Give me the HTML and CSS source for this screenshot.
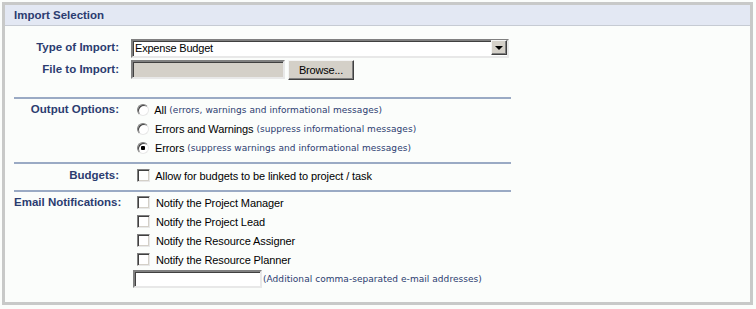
FILE: index.html
```html
<!DOCTYPE html>
<html lang="en">
<head>
<meta charset="UTF-8">
<meta name="viewport" content="width=device-width, initial-scale=1.0">
<title>Import Selection</title>
<link rel="stylesheet" href="styles.css">
</head>
<body>
<div class="panel">
  <div class="panel-head">Import Selection</div>

  <div class="section section-file">
    <div class="field-label">Type of Import:</div>
    <div class="field">
      <div class="select-wrap">
        <select class="select">
          <option>Expense Budget</option>
        </select>
        <span class="select-arrow"></span>
      </div>
    </div>
    <div class="field-label">File to Import:</div>
    <div class="field">
      <span class="file-box"></span>
      <button class="btn">Browse...</button>
    </div>
  </div>

  <div class="section section-output">
    <div class="field-label">Output Options:</div>
    <div class="field-list">
      <label class="opt"><input type="radio" name="output" class="radio"> All <span class="hint">(errors, warnings and informational messages)</span></label>
      <label class="opt"><input type="radio" name="output" class="radio"> Errors and Warnings <span class="hint">(suppress informational messages)</span></label>
      <label class="opt"><input type="radio" name="output" class="radio" checked> Errors <span class="hint">(suppress warnings and informational messages)</span></label>
    </div>
  </div>

  <div class="section section-budgets">
    <div class="field-label">Budgets:</div>
    <div class="field-list">
      <label class="opt"><input type="checkbox" class="check"> Allow for budgets to be linked to project / task</label>
    </div>
  </div>

  <div class="section section-email">
    <div class="field-label">Email Notifications:</div>
    <div class="field-list">
      <label class="opt"><input type="checkbox" class="check"> Notify the Project Manager</label>
      <label class="opt"><input type="checkbox" class="check"> Notify the Project Lead</label>
      <label class="opt"><input type="checkbox" class="check"> Notify the Resource Assigner</label>
      <label class="opt"><input type="checkbox" class="check"> Notify the Resource Planner</label>
      <div class="extra">
        <input type="text" class="text-input"><span class="hint">(Additional comma-separated e-mail addresses)</span>
      </div>
    </div>
  </div>
</div>
</body>
</html>
```

FILE: styles.css
```css
body {
  margin: 0;
  padding: 2px;
  background-color: #fbfdfb;
  font-family: "Liberation Sans", Arial, sans-serif;
}

.panel {
  width: 745px;
  border: 3px solid #c8c9c8;
  background-color: #fbfdfb;
}

.panel-head {
  height: 20px;
  line-height: 20px;
  padding-left: 9px;
  background-color: #e3e8f3;
  border-bottom: 1px solid #c6cbd3;
  color: #2b3c70;
  font-size: 11.5px;
  font-weight: bold;
}

.section {
  display: grid;
  grid-template-columns: 105px 1fr;
  column-gap: 12px;
  width: 497px;
  margin-left: 9px;
  border-bottom: 2px solid #9aaac4;
}

.section-file {
  row-gap: 3px;
  padding: 12px 0 18px;
}

.section-output {
  padding: 1px 0 5px;
}

.section-budgets {
  padding: 2px 0 5px;
}

.section-email {
  padding: 1px 0 14px;
  border-bottom: none;
}

.field-label {
  height: 19px;
  line-height: 19px;
  text-align: right;
  color: #2b3c70;
  font-size: 11.5px;
  font-weight: bold;
  white-space: nowrap;
}

.field {
  display: flex;
  align-items: center;
  height: 19px;
}

.field-list {
  display: flex;
  flex-direction: column;
}

.opt {
  display: flex;
  align-items: center;
  height: 19px;
  font-size: 11px;
  letter-spacing: -0.1px;
  color: #000;
  white-space: pre;
}

.hint {
  font-family: "DejaVu Sans", Verdana, sans-serif;
  font-size: 9px;
  letter-spacing: 0.05px;
  color: #2b3c70;
}

/* select */
.select-wrap {
  position: relative;
  width: 378px;
  height: 19px;
}

.select {
  appearance: none;
  -webkit-appearance: none;
  box-sizing: border-box;
  width: 100%;
  height: 19px;
  margin: 0;
  padding: 0 0 0 2px;
  border: 2px solid;
  border-color: #808080 #e8e8e8 #e8e8e8 #808080;
  border-radius: 0;
  box-shadow: inset 1px 1px 0 #404040;
  background-color: #fff;
  font-family: "Liberation Sans", Arial, sans-serif;
  font-size: 11px;
  letter-spacing: -0.2px;
  color: #000;
  outline: none;
}

.select-arrow {
  position: absolute;
  top: 2px;
  right: 2px;
  box-sizing: border-box;
  width: 16px;
  height: 15px;
  background-color: #d4d0c8;
  border: 1px solid;
  border-color: #f4f4f4 #404040 #404040 #f4f4f4;
  box-shadow: inset -1px -1px 0 #808080;
  pointer-events: none;
}

.select-arrow::after {
  content: "";
  position: absolute;
  left: 3px;
  top: 5px;
  border-left: 4px solid transparent;
  border-right: 4px solid transparent;
  border-top: 4px solid #000;
}

/* file */
.file-box {
  box-sizing: border-box;
  width: 154px;
  height: 19px;
  background-color: #d4d0c8;
  border: 2px solid;
  border-color: #808080 #e8e8e8 #e8e8e8 #808080;
  box-shadow: inset 1px 1px 0 #404040;
}

.btn {
  box-sizing: border-box;
  width: 66px;
  height: 20px;
  margin: 0 0 0 3px;
  padding: 0;
  background-color: #d4d0c8;
  border: 1px solid;
  border-color: #f4f4f4 #404040 #404040 #f4f4f4;
  box-shadow: inset -1px -1px 0 #808080;
  font-family: "Liberation Sans", Arial, sans-serif;
  font-size: 11px;
  letter-spacing: -0.2px;
  color: #000;
}

/* radios and checkboxes */
.radio,
.check {
  appearance: none;
  -webkit-appearance: none;
  box-sizing: border-box;
  width: 12px;
  height: 12px;
  margin: 0 3px 0 6px;
  background-color: #fff;
  border: 1px solid;
  border-color: #808080 #e8e8e8 #e8e8e8 #808080;
  flex: none;
}

.radio {
  border-radius: 50%;
  box-shadow: inset 1px 1px 0 #404040;
}

.radio:checked {
  background-image: radial-gradient(circle, #000 0, #000 2px, #fff 2.5px);
}

.check {
  width: 13px;
  height: 13px;
  box-shadow: inset 1px 1px 0 #404040, inset -1px -1px 0 #d4d0c8;
}

.extra {
  display: flex;
  align-items: center;
  margin-top: 1px;
  height: 18px;
}

.text-input {
  box-sizing: border-box;
  width: 129px;
  height: 18px;
  margin: 0 1px 0 2px;
  padding: 0;
  background-color: #fff;
  border: 2px solid;
  border-color: #808080 #e8e8e8 #e8e8e8 #808080;
  box-shadow: inset 1px 1px 0 #404040;
  outline: none;
}
```
